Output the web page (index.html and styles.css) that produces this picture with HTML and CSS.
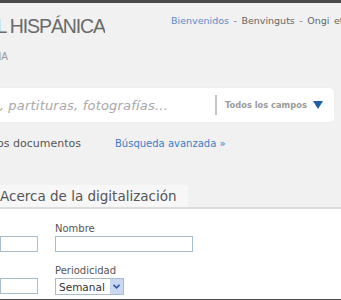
FILE: index.html
```html
<!DOCTYPE html>
<html lang="es">
<head>
  <meta charset="UTF-8">
  <title>Biblioteca Digital Hispánica</title>
  <link rel="stylesheet" href="styles.css">
</head>
<body>
  <div class="topbar"></div>

  <div class="header">
    <div class="brand">
      <div class="brand-title"><span>BIBLIOTECA DIGITAL HISPÁNICA</span></div>
      <div class="brand-sub"><span>BIBLIOTECA NACIONAL DE ESPAÑA</span></div>
    </div>
    <div class="langs">
      <a class="lang active">Bienvenidos</a> - <a class="lang">Benvinguts</a> - <a class="lang">Ongi etorri</a>
    </div>
  </div>

  <div class="search">
    <div class="search-text"><span>Libros, manuscritos, mapas, partituras, fotografías...</span></div>
    <div class="search-divider"></div>
    <div class="search-field">Todos los campos</div>
    <div class="search-arrow"></div>
  </div>

  <div class="search-links">
    <div class="search-all"><span>Buscar en todos los documentos</span></div>
    <a class="advanced">Búsqueda avanzada »</a>
  </div>

  <div class="tabs">
    <div class="tab">Acerca de la digitalización</div>
  </div>

  <div class="panel">
    <div class="form-row">
      <div class="field short">
        <label>Correo</label>
        <input type="text">
      </div>
      <div class="field">
        <label>Nombre</label>
        <input type="text" class="wide">
      </div>
    </div>
    <div class="form-row">
      <div class="field short">
        <label>Apellidos</label>
        <input type="text">
      </div>
      <div class="field">
        <label>Periodicidad</label>
        <div class="select">
          <span class="select-value">Semanal</span>
          <span class="select-btn">
            <svg width="7" height="5" viewBox="0 0 7 5"><path d="M0.5 0.8 L3.5 3.8 L6.5 0.8" fill="none" stroke="#2b5aa8" stroke-width="1.6"/></svg>
          </span>
        </div>
      </div>
    </div>
  </div>

  <div class="bottombar"></div>
</body>
</html>
```

FILE: styles.css
```css
body {
  margin: 0;
  width: 341px;
  height: 300px;
  overflow: hidden;
  background: #f1f1f1;
  font-family: 'DejaVu Sans', Verdana, sans-serif;
  color: #555;
}

.topbar {
  height: 3px;
  background: #4a4a4a;
}

.header {
  display: flex;
  height: 79px;
  overflow: hidden;
}

.brand {
  width: 171px;
  flex-shrink: 0;
}

.brand-title {
  width: 105px;
  display: flex;
  justify-content: flex-end;
  white-space: nowrap;
  overflow: hidden;
  margin-top: 12px;
  font-family: 'Liberation Sans', Arial, sans-serif;
  font-size: 19.5px;
  color: #6a6a6a;
  letter-spacing: -1.1px;
}

.brand-sub {
  width: 8px;
  display: flex;
  justify-content: flex-end;
  white-space: nowrap;
  overflow: hidden;
  margin-top: 13px;
  font-family: 'Liberation Sans', Arial, sans-serif;
  font-size: 10px;
  color: #999;
}

.langs {
  white-space: nowrap;
  margin-top: 12px;
  font-size: 9.5px;
  word-spacing: 1.5px;
  color: #777;
}

.lang {
  color: #666;
}

.lang.active {
  color: #5b8ac8;
}

.search {
  display: flex;
  align-items: center;
  width: 334px;
  height: 34px;
  margin-top: 6px;
  background: #fff;
  border-radius: 0 4px 4px 0;
  box-shadow: 0 0 1px rgba(0,0,0,0.15);
}

.search-text {
  width: 168px;
  display: flex;
  justify-content: flex-end;
  white-space: nowrap;
  overflow: hidden;
  font-size: 13px;
  font-style: italic;
  color: #a8a8a8;
  letter-spacing: 0.2px;
}

.search-divider {
  width: 2px;
  height: 20px;
  margin-left: 47px;
  background: #c4c4c4;
}

.search-field {
  margin-left: 8px;
  font-size: 8.3px;
  font-weight: bold;
  color: #9a9a9a;
  white-space: nowrap;
}

.search-arrow {
  margin-left: 6px;
  width: 0;
  height: 0;
  border-left: 5px solid transparent;
  border-right: 5px solid transparent;
  border-top: 8px solid #1f5fa8;
}

.search-links {
  display: flex;
  align-items: center;
  margin-top: 15px;
}

.search-all {
  width: 81px;
  display: flex;
  justify-content: flex-end;
  white-space: nowrap;
  overflow: hidden;
  font-size: 11px;
  color: #555;
}

.advanced {
  margin-left: 34px;
  font-size: 10px;
  color: #3a7dc4;
  white-space: nowrap;
}

.tabs {
  display: flex;
  margin-top: 35px;
}

.tab {
  width: 188px;
  height: 22px;
  line-height: 22px;
  background: #f7f7f7;
  border-radius: 0 4px 0 0;
  font-size: 13.5px;
  color: #555;
  white-space: nowrap;
}

.panel {
  height: 90px;
  background: #fff;
  border-top: 2px solid #dcdcdc;
  overflow: hidden;
}

.form-row {
  display: flex;
  margin-top: 14px;
}

.form-row + .form-row {
  margin-top: 13px;
}

.field {
  display: flex;
  flex-direction: column;
  margin-left: 17px;
}

.field.short {
  width: 38px;
  margin-left: 0;
}

.field label {
  font-size: 10px;
  color: #555;
  margin-bottom: 2px;
  white-space: nowrap;
}

.field.short label {
  visibility: hidden;
}

.field input {
  width: 38px;
  height: 16px;
  margin: 0;
  padding: 0;
  box-sizing: border-box;
  border: 1px solid #a9bccb;
  background: #fff;
}

.field input.wide {
  width: 138px;
}

.select {
  display: flex;
  align-items: center;
  width: 69px;
  height: 17px;
  box-sizing: border-box;
  border: 1px solid #a9bccb;
  font-size: 10.5px;
  color: #333;
}

.select-value {
  flex: 1;
  padding-left: 3px;
}

.select-btn {
  width: 13px;
  height: 15px;
  display: flex;
  align-items: center;
  justify-content: center;
  background: #c9d8f0;
}

.bottombar {
  height: 3px;
  background: #4a4a4a;
}
```
